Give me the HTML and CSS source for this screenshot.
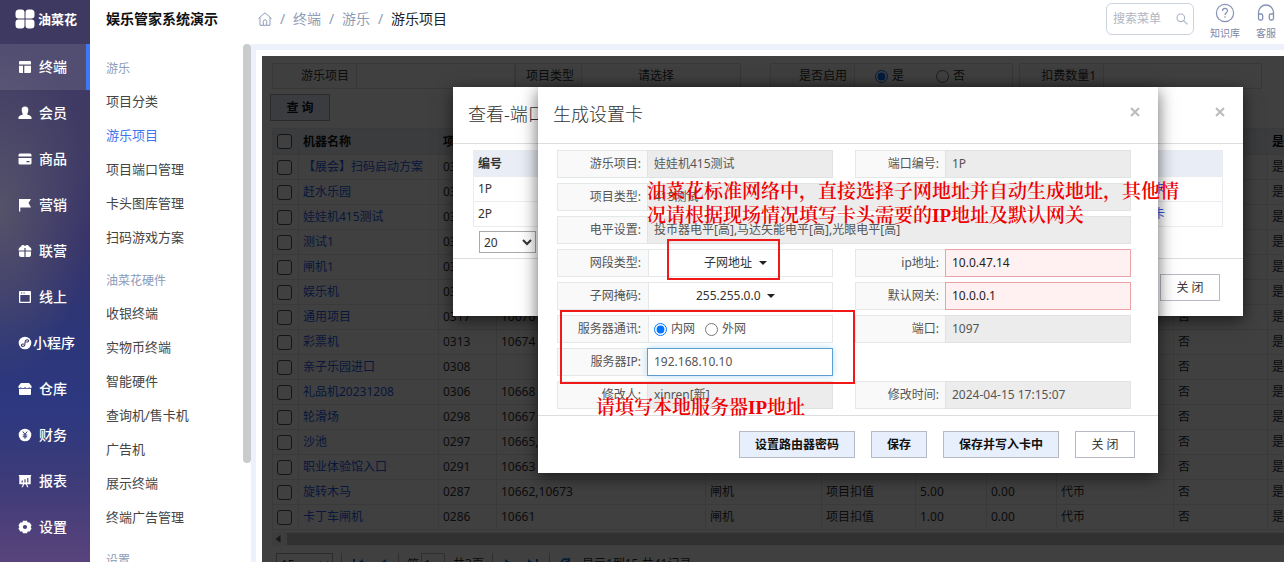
FILE: index.html
```
<!DOCTYPE html>
<html lang="zh-CN">
<head>
<meta charset="utf-8">
<title>娱乐管家系统演示</title>
<link rel="stylesheet" href="styles.css">
</head>
<body>
<div class="app">
  <nav class="rail">
    <div class="brand">
      <svg width="20" height="20" viewBox="0 0 20 20" fill="#fff"><path d="M4 0.500h2.500a3 3 0 0 1 3 3v6h-6a3 3 0 0 1-3-3V4A3.500 3.500 0 0 1 4 .5zM13.500.5H16A3.500 3.500 0 0 1 19.500 4v2.500a3 3 0 0 1-3 3h-6v-6a3 3 0 0 1 3-3zM3.500 10.500h6v6a3 3 0 0 1-3 3H4A3.500 3.500 0 0 1 .5 16v-2.500a3 3 0 0 1 3-3zM10.500 10.500h6a3 3 0 0 1 3 3V16a3.500 3.500 0 0 1-3.500 3.500h-2.500a3 3 0 0 1-3-3z"/></svg>
      <span>油菜花</span>
    </div>
    <a class="rail-item active" href="#"><svg viewBox="0 0 14 14"><path d="M2 1h10a1 1 0 0 1 1 1v2.500H1V2a1 1 0 0 1 1-1zM1 5.700h4V13H2a1 1 0 0 1-1-1zM6.300 5.700H13V12a1 1 0 0 1-1 1H6.300z"/></svg><span>终端</span></a>
    <a class="rail-item" href="#"><svg viewBox="0 0 14 14"><path d="M7 .5a3.300 3.300 0 0 1 3.300 3.500c0 2-1.100 3.800-1.100 4.300 0 .7 4.300 1 4.300 3.400v1.300H.5v-1.300c0-2.400 4.300-2.700 4.300-3.400 0-.5-1.100-2.300-1.100-4.300A3.300 3.300 0 0 1 7 .5z"/></svg><span>会员</span></a>
    <a class="rail-item" href="#"><svg viewBox="0 0 14 14"><path d="M2 1.500h10A1.500 1.500 0 0 1 13.500 3v1.500H.5V3A1.500 1.500 0 0 1 2 1.500zM.5 6h13v5a1.500 1.500 0 0 1-1.500 1.500H2A1.500 1.500 0 0 1 .5 11zm8 3v1.200h3V9z" fill-rule="evenodd"/></svg><span>商品</span></a>
    <a class="rail-item" href="#"><svg viewBox="0 0 14 14"><path d="M1 1h12l-2.500 4L13 9.500H2.300V13.500H1z"/></svg><span>营销</span></a>
    <a class="rail-item" href="#"><svg viewBox="0 0 14 14"><path d="M6.400 6.400H.5C.5 4 2 2.800 3 2.500 3.500.8 5.500.5 7 2 8.500.5 10.500.8 11 2.500c1 .3 2.500 1.500 2.500 3.900H7.600V4H6.400zM1 7.600h5.400v5.400H3a2 2 0 0 1-2-2zM7.600 7.600H13V11a2 2 0 0 1-2 2H7.600z"/></svg><span>联营</span></a>
    <a class="rail-item" href="#"><svg viewBox="0 0 14 14"><path d="M2 1h10a1 1 0 0 1 1 1v10a1 1 0 0 1-1 1H2a1 1 0 0 1-1-1V2a1 1 0 0 1 1-1zm.3 4v6.700h9.400V5zM3 2.500v1h1.200v-1zm2.500 0v1h1.200v-1z" fill-rule="evenodd"/></svg><span>线上</span></a>
    <a class="rail-item tight" href="#"><svg viewBox="0 0 14 14"><circle cx="7" cy="7" r="6.300"/><path d="M6 8.200c-1.500-.6-3 .2-2.500 1.500.5 1.200 3 .8 3.300-.9L7.200 5.400C7.600 3.600 10 3.200 10.500 4.500c.3 1-.8 1.700-2.300 1.400" fill="none" stroke="#3a3a70" stroke-width="1.100"/></svg><span>小程序</span></a>
    <a class="rail-item" href="#"><svg viewBox="0 0 14 14"><path d="M3 1h8l2.500 3v2H12V5.400h-1.500V6h-2.500V5.400H6V6H3.500V5.400H2V6H.5V4zM1 6.800h12V12a1 1 0 0 1-1 1H2a1 1 0 0 1-1-1z"/></svg><span>仓库</span></a>
    <a class="rail-item" href="#"><svg viewBox="0 0 14 14"><circle cx="7" cy="7" r="6.300"/><path d="M4.800 3.500 7 6.300l2.200-2.800M7 6.300v4.500M4.800 7h4.400M4.800 8.800h4.400" fill="none" stroke="#33387a" stroke-width="1"/></svg><span>财务</span></a>
    <a class="rail-item" href="#"><svg viewBox="0 0 14 14"><path d="M.8 1h12.400v1.200h-.5v8H9l1.500 3H9.200l-1.500-3H6.300l-1.500 3H3.500l1.500-3H1.300v-8H.8z"/><path d="M4.200 8.500v-2M7 8.500V5.300M9.800 8.500V4" stroke="#453c76" stroke-width="1.100"/></svg><span>报表</span></a>
    <a class="rail-item" href="#"><svg viewBox="0 0 14 14"><path d="M5 .8h4l.7 1.800 2-.1 1.900 3L12.600 7l1 1.500-1.900 3-2-.1L9 13.200H5l-.7-1.800-2 .1-1.900-3L1.400 7 .4 5.500l1.900-3 2 .1zM7 4.900a2.100 2.100 0 1 0 0 4.200 2.100 2.100 0 0 0 0-4.200z" fill-rule="evenodd"/></svg><span>设置</span></a>
  </nav>

  <aside class="submenu">
    <h1 class="system-name">娱乐管家系统演示</h1>
    <div class="submenu-scroll">
      <div class="menu-list">
        <h2>游乐</h2>
        <a href="#">项目分类</a>
        <a href="#" class="current">游乐项目</a>
        <a href="#">项目端口管理</a>
        <a href="#">卡头图库管理</a>
        <a href="#">扫码游戏方案</a>
        <h2>油菜花硬件</h2>
        <a href="#">收银终端</a>
        <a href="#">实物币终端</a>
        <a href="#">智能硬件</a>
        <a href="#">查询机/售卡机</a>
        <a href="#">广告机</a>
        <a href="#">展示终端</a>
        <a href="#">终端广告管理</a>
        <h2>设置</h2>
      </div>
      <div class="scroll-thumb"></div>
    </div>
  </aside>

  <main class="main">
    <header class="topbar">
      <div class="crumbs">
        <svg width="14" height="14" viewBox="0 0 14 14" fill="none" stroke="#8f9cb8" stroke-width="1"><path d="M.5 6.500 7 .8l6.500 5.700M2 5.500v7.800h10V5.500M5.300 13V9.500a1.700 1.700 0 0 1 3.400 0V13"/></svg>
        <i>/</i><a href="#">终端</a><i>/</i><a href="#">游乐</a><i>/</i><span>游乐项目</span>
      </div>
      <div class="tools">
        <label class="search">
          <input type="text" placeholder="搜索菜单" aria-label="搜索菜单">
          <svg width="12" height="12" viewBox="0 0 12 12" fill="none" stroke="#a9b2c3" stroke-width="1.100"><circle cx="4.800" cy="4.800" r="3.800"/><path d="m7.600 7.600 3.800 3.800"/></svg>
        </label>
        <a class="tool" href="#"><svg width="20" height="20" viewBox="0 0 20 20" fill="none" stroke="#8592b5" stroke-width="1.200"><circle cx="10" cy="10" r="8.600"/><path d="M7.500 8c0-3.400 5-3.300 5-.3 0 2-2.500 2-2.500 4.300M10 13.200v1.500"/></svg><span>知识库</span></a>
        <a class="tool" href="#"><svg width="20" height="20" viewBox="0 0 20 20" fill="none" stroke="#8592b5" stroke-width="1.300"><path d="M2.500 12V9.500a7.500 7.500 0 0 1 15 0V12M2.500 11h2.700a1.500 1.500 0 0 1 1.500 1.500v3A1.500 1.500 0 0 1 5.200 17h-1.200a1.500 1.500 0 0 1-1.500-1.500zM17.500 11h-2.700a1.500 1.500 0 0 0-1.500 1.500v3a1.500 1.500 0 0 0 1.500 1.500h1.200a1.500 1.500 0 0 0 1.500-1.500z"/></svg><span>客服</span></a>
      </div>
    </header>

    <div class="stage">
      <section class="page">
        <div class="filters">
          <div class="filter"><label for="f1">游乐项目</label><input id="f1" type="text"></div>
          <div class="filter short"><label for="f2">项目类型</label><select id="f2"><option>请选择</option></select></div>
          <div class="filter"><span class="filter-name">是否启用</span><div class="radios"><label><input type="radio" name="on" checked>是</label><label><input type="radio" name="on">否</label></div></div>
          <div class="filter"><label for="f4">扣费数量1</label><input id="f4" type="text"></div>
        </div>
        <button class="query" type="button">查 询</button>
        <table class="grid">
          <colgroup><col class="c-check"><col class="c-name"><col class="c-code"><col class="c-port"><col class="c-kind"><col class="c-mode"><col class="c-num"><col class="c-num2"><col class="c-coin"><col class="c-flag"><col class="c-last"></colgroup>
          <thead><tr><th><input type="checkbox" aria-label="全选"></th><th>机器名称</th><th>项目</th><th></th><th></th><th></th><th></th><th></th><th></th><th></th><th>是</th></tr></thead>
          <tbody>
            <tr><td><input type="checkbox" aria-label="选择"></td><td><a href="#">【展会】扫码启动方案</a></td><td>03</td><td></td><td></td><td></td><td></td><td></td><td></td><td></td><td>是</td></tr>
            <tr><td><input type="checkbox" aria-label="选择"></td><td><a href="#">赶水乐园</a></td><td>03</td><td></td><td></td><td></td><td></td><td></td><td></td><td></td><td>是</td></tr>
            <tr><td><input type="checkbox" aria-label="选择"></td><td><a href="#">娃娃机415测试</a></td><td>03</td><td></td><td></td><td></td><td></td><td></td><td></td><td></td><td>是</td></tr>
            <tr><td><input type="checkbox" aria-label="选择"></td><td><a href="#">测试1</a></td><td>03</td><td></td><td></td><td></td><td></td><td></td><td></td><td></td><td>是</td></tr>
            <tr><td><input type="checkbox" aria-label="选择"></td><td><a href="#">闸机1</a></td><td>03</td><td></td><td></td><td></td><td></td><td></td><td></td><td></td><td>是</td></tr>
            <tr><td><input type="checkbox" aria-label="选择"></td><td><a href="#">娱乐机</a></td><td>03</td><td></td><td></td><td></td><td></td><td></td><td></td><td></td><td>是</td></tr>
            <tr><td><input type="checkbox" aria-label="选择"></td><td><a href="#">通用项目</a></td><td>0317</td><td>10676</td><td></td><td></td><td></td><td></td><td></td><td>否</td><td>是</td></tr>
            <tr><td><input type="checkbox" aria-label="选择"></td><td><a href="#">彩票机</a></td><td>0313</td><td>10674</td><td></td><td></td><td></td><td></td><td></td><td>否</td><td>是</td></tr>
            <tr><td><input type="checkbox" aria-label="选择"></td><td><a href="#">亲子乐园进口</a></td><td>0308</td><td></td><td></td><td></td><td></td><td></td><td></td><td>否</td><td>是</td></tr>
            <tr><td><input type="checkbox" aria-label="选择"></td><td><a href="#">礼品机20231208</a></td><td>0306</td><td>10668</td><td></td><td></td><td></td><td></td><td></td><td>否</td><td>是</td></tr>
            <tr><td><input type="checkbox" aria-label="选择"></td><td><a href="#">轮滑场</a></td><td>0298</td><td>10667</td><td></td><td></td><td></td><td></td><td></td><td>否</td><td>是</td></tr>
            <tr><td><input type="checkbox" aria-label="选择"></td><td><a href="#">沙池</a></td><td>0297</td><td>10665,</td><td></td><td></td><td></td><td></td><td></td><td>否</td><td>是</td></tr>
            <tr><td><input type="checkbox" aria-label="选择"></td><td><a href="#">职业体验馆入口</a></td><td>0291</td><td>10663</td><td></td><td></td><td></td><td></td><td></td><td>否</td><td>是</td></tr>
            <tr><td><input type="checkbox" aria-label="选择"></td><td><a href="#">旋转木马</a></td><td>0287</td><td>10662,10673</td><td>闸机</td><td>项目扣值</td><td>5.00</td><td>0.00</td><td>代币</td><td>否</td><td>是</td></tr>
            <tr><td><input type="checkbox" aria-label="选择"></td><td><a href="#">卡丁车闸机</a></td><td>0286</td><td>10661</td><td>闸机</td><td>项目扣值</td><td>1.00</td><td>0.00</td><td>代币</td><td>否</td><td>是</td></tr>
          </tbody>
        </table>
        <div class="hscroll"><svg width="6" height="8" viewBox="0 0 6 8" fill="#666"><path d="M5.500 0v8L.5 4z"/></svg><div></div></div>
        <div class="pager">
          <select aria-label="每页条数"><option>15</option></select>
          <i></i>
          <svg width="12" height="12" viewBox="0 0 12 12" fill="#1f7fd5"><path d="M1 1h2v10H1zM11 1v10L4 6z"/></svg>
          <svg width="12" height="12" viewBox="0 0 12 12" fill="#1f7fd5"><path d="M10 1v10L3 6z"/></svg>
          <i></i>
          <label>第<input type="text" value="1"></label><span>共3页</span>
          <i></i>
          <svg width="12" height="12" viewBox="0 0 12 12" fill="#1f7fd5"><path d="M2 1v10l7-5z"/></svg>
          <svg width="12" height="12" viewBox="0 0 12 12" fill="#1f7fd5"><path d="M9 1h2v10H9zM1 1v10l7-5z"/></svg>
          <i></i>
          <svg width="12" height="12" viewBox="0 0 12 12" fill="none" stroke="#1f7fd5" stroke-width="2"><path d="M2 7a4 4 0 0 1 7-4M10 5a4 4 0 0 1-7 4M9 0v4H5M3 12V8h4"/></svg>
          <span>显示1到15,共41记录</span>
        </div>
      </section>
      <div class="mask"></div>

      <section class="dialog view-dialog">
        <header><h3>查看-端口</h3><button class="close" type="button" aria-label="关闭"><svg width="10" height="10" viewBox="0 0 10 10"><path d="m1 1 8 8M9 1 1 9"/></svg></button></header>
        <div class="view-body">
          <table class="ports">
            <thead><tr><th>编号</th><th></th></tr></thead>
            <tbody><tr><td>1P</td><td><a href="#">生成设置卡</a></td></tr><tr><td>2P</td><td><a href="#">生成设置卡</a></td></tr></tbody>
          </table>
          <div class="ports-pager"><select aria-label="每页条数"><option>20</option></select></div>
        </div>
        <footer><button class="btn plain" type="button">关 闭</button></footer>
      </section>

      <section class="dialog card-dialog">
        <header><h3>生成设置卡</h3><button class="close" type="button" aria-label="关闭"><svg width="10" height="10" viewBox="0 0 10 10"><path d="m1 1 8 8M9 1 1 9"/></svg></button></header>
        <form class="card-form">
          <div class="field"><label for="a1">游乐项目:</label><input id="a1" disabled value="娃娃机415测试"></div>
          <div class="field"><label for="a2">端口编号:</label><input id="a2" disabled value="1P"></div>
          <div class="field wide"><label for="a3">项目类型:</label><input id="a3" disabled value="415测试"></div>
          <div class="field wide"><label for="a4">电平设置:</label><input id="a4" disabled value="投币器电平[高],马达矢能电平[高],光眼电平[高]"></div>
          <div class="field"><label for="a5">网段类型:</label><div class="combo"><select id="a5"><option>子网地址</option></select><svg width="8" height="4" viewBox="0 0 8 4"><path d="M0 0h8L4 4z"/></svg></div></div>
          <div class="field"><label for="a6">ip地址:</label><input id="a6" class="required" value="10.0.47.14"></div>
          <div class="field"><label for="a7">子网掩码:</label><div class="combo"><select id="a7"><option>255.255.0.0</option></select><svg width="8" height="4" viewBox="0 0 8 4"><path d="M0 0h8L4 4z"/></svg></div></div>
          <div class="field"><label for="a8">默认网关:</label><input id="a8" class="required" value="10.0.0.1"></div>
          <div class="field"><span class="name">服务器通讯:</span><div class="choice"><label><input type="radio" name="net" checked>内网</label><label><input type="radio" name="net">外网</label></div></div>
          <div class="field"><label for="a9">端口:</label><input id="a9" disabled value="1097"></div>
          <div class="field"><label for="a10">服务器IP:</label><input id="a10" class="focused" value="192.168.10.10"></div>
          <div class="field first"><label for="a11">修改人:</label><input id="a11" disabled value="xinren[新]"></div>
          <div class="field"><label for="a12">修改时间:</label><input id="a12" disabled value="2024-04-15 17:15:07"></div>
        </form>
        <footer><button class="btn" type="button">设置路由器密码</button><button class="btn" type="button">保存</button><button class="btn" type="button">保存并写入卡中</button><button class="btn plain" type="button">关 闭</button></footer>
        <div class="mark mark-type"></div>
        <div class="mark mark-server"></div>
        <p class="note note-network">油菜花标准网络中，直接选择子网地址并自动生成地址，其他情<br>况请根据现场情况填写卡头需要的IP地址及默认网关</p>
        <p class="note note-server">请填写本地服务器IP地址</p>
      </section>
    </div>
  </main>
</div>
</body>
</html>
```
FILE: styles.css
```
* { box-sizing: border-box; }
body { margin: 0; font: 12px/16px "Noto Sans", "Noto Sans CJK SC", sans-serif; color: #333; background: #fff; }
input, select, button { font: inherit; color: inherit; margin: 0; }
a { color: inherit; text-decoration: none; }
h1, h2, h3, p { margin: 0; font-weight: 400; }
i { font-style: normal; }
.app { display: flex; height: 100vh; overflow: hidden; }

.rail { flex: 0 0 90px; display: flex; flex-direction: column; color: #fff; background: radial-gradient(ellipse 90px 170px at 0 210px, #55526a, transparent), linear-gradient(#3d3960 0, #403b65 150px, #38346a 240px, #2c3678 330px, #2c3880 410px, #3d3b78 480px, #59437c 562px); }
.brand { flex: 0 0 44px; display: flex; align-items: center; gap: 3px; padding: 0 0 6px 15px; font-weight: 700; font-size: 13px; }
.rail-item { flex: 0 0 46px; display: flex; align-items: center; gap: 7px; padding-left: 18px; font-size: 14px; font-weight: 500; }
.rail-item svg { width: 14px; height: 14px; fill: #fff; }
.rail-item.active { background: rgba(255, 255, 255, .1); border-right: 4px solid #3f78f5; }
.rail-item.tight { gap: 1px; }

.submenu { flex: 0 0 161px; display: flex; flex-direction: column; }
.system-name { flex: 0 0 44px; padding: 8px 16px; font-size: 14px; line-height: 22px; font-weight: 600; color: #111; }
.submenu-scroll { flex: 1; min-height: 0; display: flex; justify-content: space-between; overflow: hidden; }
.menu-list { padding-left: 16px; }
.menu-list h2 { padding-top: 12px; font-size: 12px; line-height: 30px; color: #8d9ab8; }
.menu-list h2:first-child { padding-top: 10px; }
.menu-list a { display: block; font-size: 13px; line-height: 34px; color: #444; }
.menu-list a.current { color: #3f74f0; }
.scroll-thumb { width: 8px; height: 419px; border-radius: 4px; background: #c9cbcc; }

.main { flex: 1; min-width: 0; display: flex; flex-direction: column; }
.topbar { flex: 0 0 44px; display: flex; justify-content: space-between; padding-left: 7px; }
.crumbs { display: flex; align-items: center; height: 38px; font-size: 14px; color: #8f9cb8; }
.crumbs i { width: 21px; text-align: center; }
.crumbs span { color: #222; }
.tools { display: flex; padding-top: 3px; gap: 9px; }
.search { display: flex; align-items: center; width: 88px; height: 32px; padding: 0 5px 0 6px; border: 1px solid #ccd3df; border-radius: 6px; margin-right: 1px; }
.search input { flex: 1; min-width: 0; border: 0; padding: 0; outline: 0; background: none; }
.search input::placeholder { color: #aeb6c4; }
.tool { width: 42px; display: flex; flex-direction: column; align-items: center; font-size: 10px; color: #7c89ab; }
.tool:last-child { width: 36px; margin-left: -7px; }
.tool svg { margin-bottom: 2px; flex: none; }

.stage { position: relative; flex: 1; min-height: 0; overflow: hidden; border: solid #edf1fb; border-width: 6px 0 0 5px; padding: 6px 0 0 6px; }
.page { height: 100%; padding: 7px 0 0 10px; overflow: hidden; }
.filters { display: grid; grid-template-columns: 243px 255px 249px 244px; height: 27px; }
.filter { display: flex; width: 243px; height: 26px; border: 1px solid #ddd; line-height: 24px; }
.filter.short { width: 226px; }
.filter > label, .filter-name { flex: 0 0 84px; padding-right: 7px; text-align: right; background: #f9f9f9; border-right: 1px solid #ddd; }
.filter.short > label { flex-basis: 66px; }
.filter > input, .filter > select { flex: 1; min-width: 0; border: 0; background: #fff; appearance: none; }
.filter > select { padding-left: 56px; }
.radios { display: flex; gap: 32px; padding-left: 20px; }
.radios label { display: flex; align-items: center; gap: 4px; }
.radios input { width: 13px; height: 13px; }
.query { display: block; width: 60px; height: 27px; margin: 4px 0 7px -2px; padding: 0; border: 1px solid #a9acb5; background: #e8effc; font-weight: 600; color: #111; }

.grid { table-layout: fixed; border-collapse: collapse; width: 1050px; }
.c-check { width: 26px; } .c-name { width: 140px; } .c-code { width: 58px; } .c-port { width: 209px; } .c-kind { width: 116px; } .c-mode { width: 94px; } .c-num { width: 71px; } .c-num2 { width: 70px; } .c-coin { width: 117px; } .c-flag { width: 94px; } .c-last { width: 55px; }
.grid th, .grid td { height: 25px; padding: 0 4px; border: 1px solid #e6e6e6; text-align: left; white-space: nowrap; line-height: 16px; }
.grid th { height: 26px; background: #e9edf6; font-weight: 600; color: #111; }
.grid a { color: #2a5de8; }
.grid input { display: block; appearance: none; width: 15px; height: 15px; border: 1px solid #555; border-radius: 3px; background: #fff; }
.hscroll { display: flex; align-items: center; gap: 6px; height: 14px; margin-top: 2px; padding-left: 3px; background: #f1f1f1; }
.hscroll div { flex: 1; height: 12px; background: #c1c1c1; }
.pager { display: flex; align-items: center; gap: 8px; height: 30px; margin-top: 3px; padding-left: 4px; white-space: nowrap; }
.pager select { width: 57px; height: 22px; border: 1px solid #aaa; background: #fff; }
.pager i { width: 1px; height: 22px; background: #bbb; }
.pager svg { margin: 0 2px; }
.pager label input { width: 24px; height: 22px; margin-left: 2px; border: 1px solid #bbb; }
.mask { position: absolute; inset: 6px 0 0 6px; background: rgba(0, 0, 0, .75); }

.dialog { position: absolute; top: 37px; display: flex; flex-direction: column; background: #fff; box-shadow: 0 4px 16px rgba(0, 0, 0, .6); }
.view-dialog { left: 197px; width: 790px; }
.card-dialog { left: 282px; width: 620px; }
.dialog > header { display: flex; align-items: center; justify-content: space-between; height: 57px; padding: 0 18px 2px 15px; border-bottom: 1px solid #ddd; }
.dialog h3 { font-size: 18px; line-height: 24px; color: #333; font-weight: 300; }
.close { display: grid; border: 0; padding: 0 0 4px; background: none; }
.close path { stroke: #bbb; stroke-width: 2; }
.dialog > footer { display: flex; justify-content: flex-end; gap: 16px; padding: 15px 23px; border-top: 1px solid #ddd; }
.btn { height: 27px; padding: 0 15px; border: 1px solid #b5bac4; background: #e8effc; font-weight: 600; color: #111; }
.btn.plain { width: 60px; padding: 0; background: #fff; font-weight: 400; color: #333; }

.view-body { padding: 6px 20px 0; }
.ports { width: 100%; border-collapse: collapse; }
.ports th, .ports td { height: 25px; padding: 0 4px; border: 1px solid #e9edf2; text-align: left; }
.ports th { height: 26px; background: #e9eef6; font-weight: 600; }
.ports td:last-child { width: 122px; color: #2a5de8; }
.ports-pager { padding: 4px 6px; height: 31px; }
.ports-pager select { width: 57px; height: 22px; border: 1px solid #aaa; background: #fff; }
.view-dialog > footer { height: 58px; }

.card-form { display: grid; grid-template-columns: repeat(2, 276px); column-gap: 22px; row-gap: 5px; padding: 6px 19px; }
.field { display: flex; height: 28px; border: 1px solid #e4e8e6; line-height: 26px; color: #555; }
.field.wide { grid-column: span 2; }
.field.first { grid-column: 1; }
.field > label, .field > .name { flex: 0 0 90px; padding-right: 7px; text-align: right; background: #f9f9f9; }
.field > input { flex: 1; min-width: 0; margin: -1px; padding: 0 6px; border: 1px solid #dfe3e1; background: #fff; outline: 0; }
.field > input:disabled { background: #ececec; }
.field > input.required { background: #fff1f1; border-color: #e9a3a8; color: #222; }
.field > input.focused { border-color: #5f9fd0; box-shadow: 0 0 7px #b5daf5; }
.combo { flex: 1; display: flex; align-items: center; justify-content: center; gap: 6px; padding-right: 10px; border-left: 1px solid #e4e8e6; }
.combo select { appearance: none; border: 0; padding: 0; background: none; color: #333; }
.combo svg { fill: #222; }
.choice { flex: 1; display: flex; gap: 10px; padding-left: 5px; border-left: 1px solid #e4e8e6; }
.choice label { display: flex; align-items: center; gap: 4px; }
.choice input { width: 13px; height: 13px; }

.mark { position: absolute; border: 2px solid #f01818; pointer-events: none; }
.mark-type { left: 129px; top: 152px; width: 113px; height: 41px; }
.mark-server { left: 22px; top: 223px; width: 295px; height: 74px; }
.note { position: absolute; white-space: nowrap; color: #f00000; font: 600 19px/24px "Liberation Serif", "Noto Serif CJK SC", "Noto Sans CJK SC", serif; }
.note-network { left: 109px; top: 93px; }
.note-server { left: 58px; top: 309px; }
```
